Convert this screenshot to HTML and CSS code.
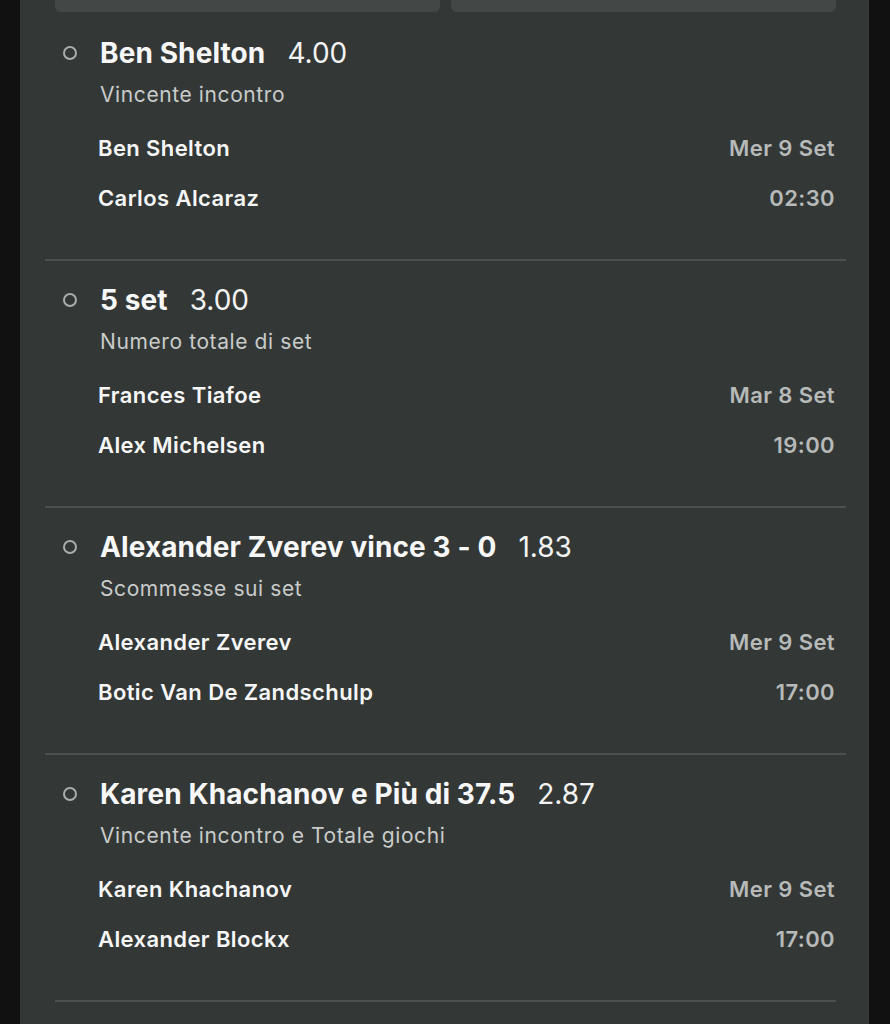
FILE: index.html
```html
<!DOCTYPE html>
<html lang="it">
<head>
<meta charset="utf-8">
<link rel="stylesheet" href="styles.css">
</head>
<body>
<div class="panel">
  <div class="top-cards">
    <div class="card"></div>
    <div class="card"></div>
  </div>

  <div class="bet first">
    <div class="title-row">
      <span class="radio"></span>
      <span class="title">Ben Shelton</span>
      <span class="odds">4.00</span>
    </div>
    <div class="market">Vincente incontro</div>
    <div class="row"><span class="name">Ben Shelton</span><span class="meta">Mer 9 Set</span></div>
    <div class="row"><span class="name">Carlos Alcaraz</span><span class="meta">02:30</span></div>
  </div>

  <div class="bet">
    <div class="title-row">
      <span class="radio"></span>
      <span class="title">5 set</span>
      <span class="odds">3.00</span>
    </div>
    <div class="market">Numero totale di set</div>
    <div class="row"><span class="name">Frances Tiafoe</span><span class="meta">Mar 8 Set</span></div>
    <div class="row"><span class="name">Alex Michelsen</span><span class="meta">19:00</span></div>
  </div>

  <div class="bet">
    <div class="title-row">
      <span class="radio"></span>
      <span class="title">Alexander Zverev vince 3 - 0</span>
      <span class="odds">1.83</span>
    </div>
    <div class="market">Scommesse sui set</div>
    <div class="row"><span class="name">Alexander Zverev</span><span class="meta">Mer 9 Set</span></div>
    <div class="row"><span class="name">Botic Van De Zandschulp</span><span class="meta">17:00</span></div>
  </div>

  <div class="bet last">
    <div class="title-row">
      <span class="radio"></span>
      <span class="title">Karen Khachanov e Più di 37.5</span>
      <span class="odds">2.87</span>
    </div>
    <div class="market">Vincente incontro e Totale giochi</div>
    <div class="row"><span class="name">Karen Khachanov</span><span class="meta">Mer 9 Set</span></div>
    <div class="row"><span class="name">Alexander Blockx</span><span class="meta">17:00</span></div>
  </div>
</div>
</body>
</html>
```

FILE: styles.css
```css
html, body {
  margin: 0;
  padding: 0;
  background: #111111;
}

body {
  font-family: Inter, "Noto Sans", "Liberation Sans", sans-serif;
  color: #f4f5f4;
}

.panel {
  margin-left: 20px;
  width: 849px;
  height: 1024px;
  background: #333837;
  overflow: hidden;
}

.top-cards {
  display: flex;
  gap: 11px;
  margin: 0 33px 0 35px;
}

.card {
  flex: 1;
  height: 12px;
  background: #434846;
  border-radius: 0 0 6px 6px;
}

.bet {
  margin: 0 23px 0 25px;
  padding: 22px 11px 46px 18px;
  border-bottom: 2px solid #4c5150;
}

.bet.first {
  padding-top: 24px;
}

.bet.last {
  margin: 0 33px 0 35px;
  padding-left: 8px;
  padding-right: 1px;
}

.title-row {
  display: flex;
  align-items: center;
  height: 34px;
}

.radio {
  width: 10px;
  height: 10px;
  border: 2px solid #a9adab;
  border-radius: 50%;
  margin-right: 23px;
  flex: none;
}

.title {
  font-size: 28px;
  font-weight: 700;
  letter-spacing: 0.1px;
  color: #f7f7f7;
}

.odds {
  font-size: 28px;
  font-weight: 400;
  margin-left: 22px;
  color: #f2f3f2;
}

.market {
  margin-top: 11px;
  padding-left: 37px;
  font-size: 21px;
  line-height: 28px;
  color: #c9cbca;
  letter-spacing: 0.6px;
}

.row {
  display: flex;
  justify-content: space-between;
  align-items: center;
  height: 30px;
  padding-left: 35px;
  font-size: 22px;
  font-weight: 600;
  letter-spacing: 0.4px;
}

.market + .row {
  margin-top: 24px;
}

.row + .row {
  margin-top: 20px;
}

.name {
  color: #f6f6f6;
}

.meta {
  color: #b7bab9;
}
```
